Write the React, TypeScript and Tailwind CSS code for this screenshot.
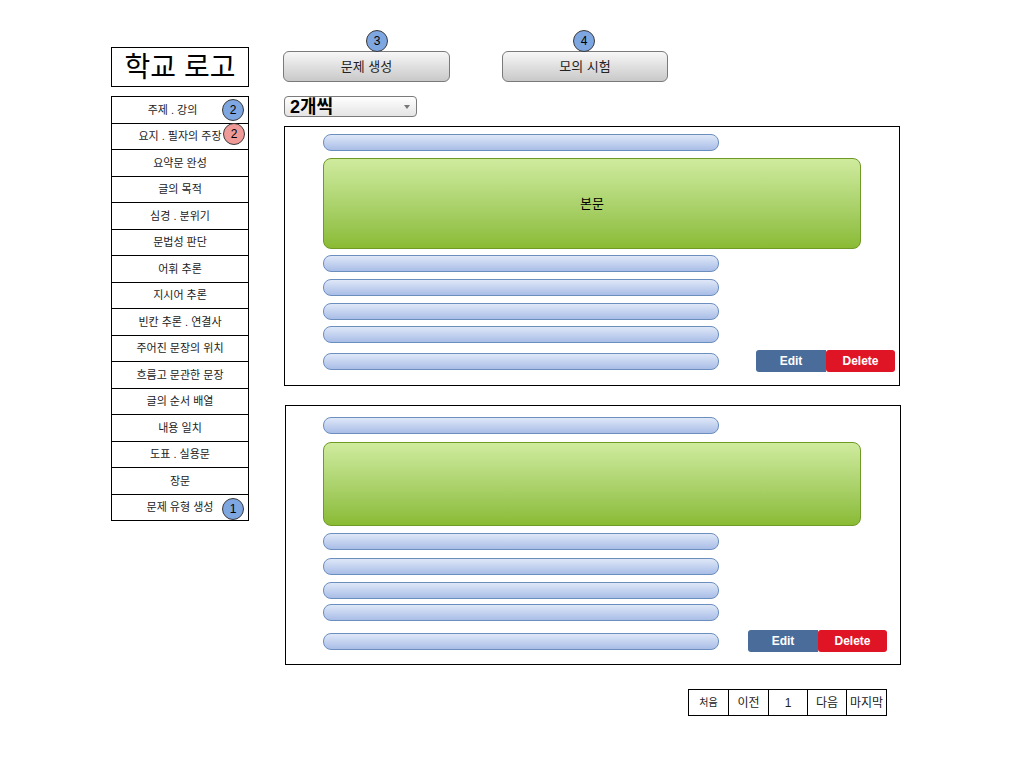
import React from "react";

const FONT = { fontFamily: '"Liberation Sans", "Noto Sans CJK KR", sans-serif' };

const items = [
  "주제 . 강의",
  "요지 . 필자의 주장",
  "요약문 완성",
  "글의 목적",
  "심경 . 분위기",
  "문법성 판단",
  "어휘 추론",
  "지시어 추론",
  "빈칸 추론 . 연결사",
  "주어진 문장의 위치",
  "흐름고 문관한 문장",
  "글의 순서 배열",
  "내용 일치",
  "도표 . 실용문",
  "장문",
  "문제 유형 생성",
];

function Badge({ n, red, className }: { n: string; red?: boolean; className: string }) {
  return (
    <div
      className={`absolute w-[22px] h-[22px] rounded-full border border-[#3a3a3a] flex items-center justify-center text-[12px] text-black ${
        red ? "bg-[#ef9a97]" : "bg-[#7ea6e0]"
      } ${className}`}
    >
      {n}
    </div>
  );
}

function Bar({ className = "" }: { className?: string }) {
  return (
    <div
      className={`w-[396px] h-[17px] rounded-[8px] border border-[#6c8ebf] bg-gradient-to-b from-[#dfe8f8] to-[#a9bde6] ${className}`}
    />
  );
}

function Card({
  pt,
  pl,
  gapAfterTop,
  greenH,
  gaps,
  rowMt,
  editGap,
  label,
  className,
}: {
  pt: string;
  pl: string;
  gapAfterTop: string;
  greenH: string;
  gaps: string[];
  rowMt: string;
  editGap: string;
  label?: string;
  className: string;
}) {
  return (
    <div className={`w-[616px] h-[260px] border border-black flex flex-col ${pl} ${pt} ${className}`}>
      <Bar />
      <div
        className={`${gapAfterTop} w-[538px] ${greenH} rounded-[8px] border border-[#6f9a25] bg-gradient-to-b from-[#cfeb9e] to-[#8abb33] flex items-center justify-center text-[13px] text-black`}
      >
        {label}
      </div>
      {gaps.map((g, i) => (
        <Bar key={i} className={g} />
      ))}
      <div className={`flex items-center h-[22px] ${rowMt}`}>
        <Bar />
        <div className={`flex ${editGap}`}>
          <div className="w-[70px] h-[22px] rounded-l-[3px] bg-[#4a6c9b] text-white text-[12px] font-bold flex items-center justify-center">
            Edit
          </div>
          <div className="w-[69px] h-[22px] rounded-[3px] bg-[#df1526] text-white text-[12px] font-bold flex items-center justify-center">
            Delete
          </div>
        </div>
      </div>
    </div>
  );
}

export default function App() {
  return (
    <div className="w-[1024px] h-[768px] bg-white text-black" style={FONT}>
      <div className="flex pl-[111px] pt-[47px]">
        {/* Sidebar */}
        <div className="w-[138px] flex flex-col">
          <div className="h-[40px] border border-black flex items-center justify-center text-[28px] leading-none pt-[1px]">
            학교 로고
          </div>
          <div className="mt-[9px] border-l border-r border-t border-black flex flex-col">
            {items.map((t, i) => (
              <div
                key={i}
                className={`relative border-b border-black flex items-center justify-center text-[11px] text-[#222] ${
                  i % 2 === 0 ? "h-[27px]" : "h-[26px]"
                } ${i === 0 ? "pr-[15px]" : ""}`}
              >
                {t}
                {i === 0 && <Badge n="2" className="left-[110px] top-[2px]" />}
                {i === 1 && <Badge n="2" red className="left-[111px] top-[-1px]" />}
                {i === 15 && <Badge n="1" className="left-[110px] top-[3px]" />}
              </div>
            ))}
          </div>
        </div>

        {/* Main */}
        <div className="ml-[34px] flex flex-col items-start">
          <div className="flex mt-[4px]">
            <div className="relative w-[167px] h-[31px] rounded-[6px] border border-[#7a7a7a] bg-gradient-to-b from-[#f7f7f7] to-[#c9c9c9] flex items-center justify-center text-[13px] text-[#222]">
              문제 생성
              <Badge n="3" className="left-[82px] top-[-22px] w-[21px] h-[21px]" />
            </div>
            <div className="relative ml-[52px] w-[166px] h-[31px] rounded-[6px] border border-[#7a7a7a] bg-gradient-to-b from-[#f7f7f7] to-[#c9c9c9] flex items-center justify-center text-[13px] text-[#222]">
              모의 시험
              <Badge n="4" className="left-[70px] top-[-22px] w-[21px] h-[21px]" />
            </div>
          </div>

          <div className="mt-[14px] ml-[1px] w-[133px] h-[21px] rounded-[4px] border border-[#7a7a7a] bg-gradient-to-b from-[#ffffff] to-[#e4e4e4] flex items-center pl-[5px] pr-[6px]">
            <span className="text-[18px] font-semibold leading-none text-black">2개씩</span>
            <span className="ml-auto w-0 h-0 border-l-[3px] border-r-[3px] border-t-[4px] border-l-transparent border-r-transparent border-t-[#777]" />
          </div>

          <Card
            className="mt-[9px] ml-[1px]"
            pl="pl-[38px]"
            pt="pt-[7px]"
            gapAfterTop="mt-[7px]"
            greenH="h-[91px]"
            gaps={["mt-[6px]", "mt-[7px]", "mt-[7px]", "mt-[6px]"]}
            rowMt="mt-[7px]"
            editGap="ml-[37px]"
            label="본문"
          />

          <Card
            className="mt-[19px] ml-[2px]"
            pl="pl-[37px]"
            pt="pt-[11px]"
            gapAfterTop="mt-[8px]"
            greenH="h-[84px]"
            gaps={["mt-[7px]", "mt-[8px]", "mt-[7px]", "mt-[5px]"]}
            rowMt="mt-[9px]"
            editGap="ml-[29px]"
          />

          <div className="mt-[24px] ml-[405px] flex h-[27px] border border-black text-[12px] text-[#222]">
            <div className="w-[40px] flex items-center justify-center border-r border-black text-[10px]">처음</div>
            <div className="w-[40px] flex items-center justify-center border-r border-black">이전</div>
            <div className="w-[39px] flex items-center justify-center border-r border-black">1</div>
            <div className="w-[39px] flex items-center justify-center border-r border-black">다음</div>
            <div className="w-[39px] flex items-center justify-center">마지막</div>
          </div>
        </div>
      </div>
    </div>
  );
}
